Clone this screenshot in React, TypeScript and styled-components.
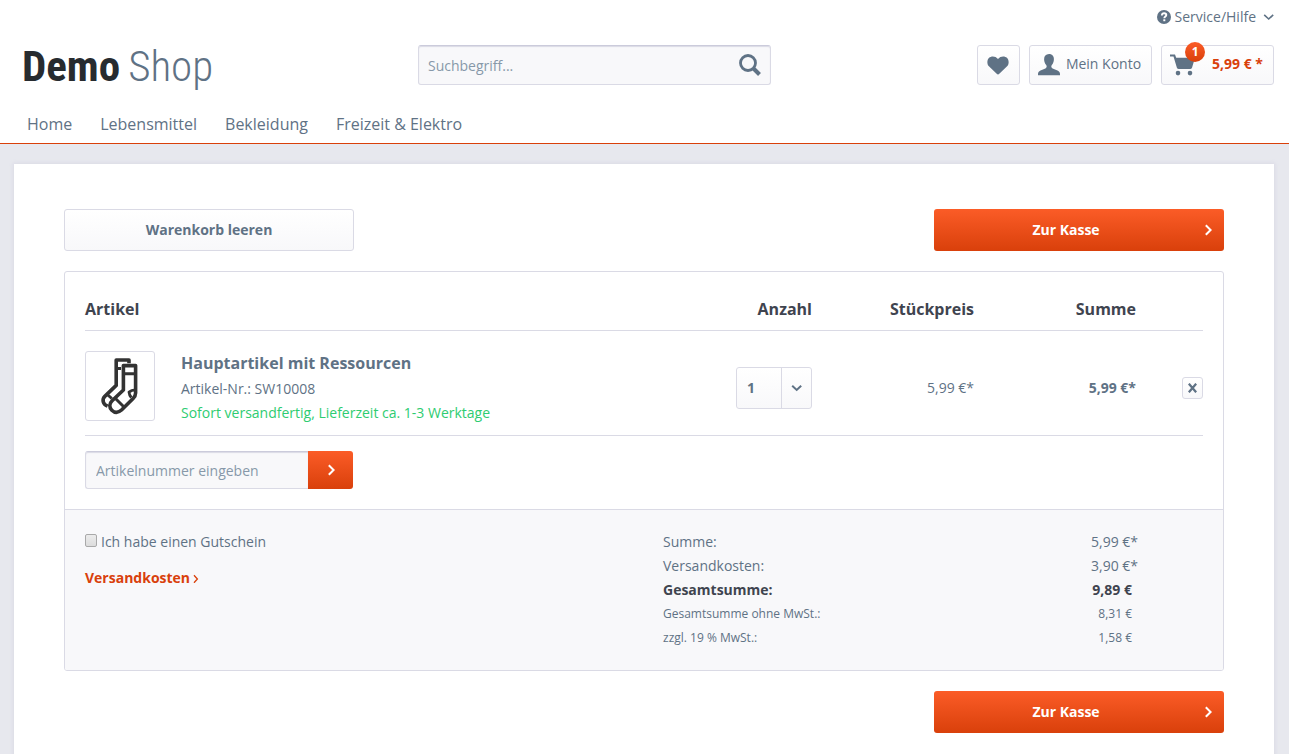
import React from "react";
import styled, { createGlobalStyle, css } from "styled-components";

const color = {
  text: "#5f7285",
  dark: "#3f444f",
  muted: "#8798a9",
  accent: "#d9400b",
  accentLight: "#fb5c27",
  border: "#dadae5",
  surface: "#f8f8fa",
  page: "#e7e8ee",
  success: "#2ecc71",
};

const GlobalStyle = createGlobalStyle`
  *, *::before, *::after { box-sizing: border-box; }
  body {
    margin: 0;
    background: ${color.page};
    color: ${color.text};
    font: 400 14px/24px "Open Sans", "Liberation Sans", sans-serif;
  }
  a { color: inherit; text-decoration: none; }
  button, input, select { font: inherit; color: inherit; margin: 0; }
  button { cursor: pointer; }
`;

const lightSurface = css`
  border: 1px solid ${color.border};
  border-radius: 3px;
  background: linear-gradient(to bottom, #fff, ${color.surface});
`;

const accentSurface = css`
  border: 0;
  background: linear-gradient(to bottom, ${color.accentLight}, ${color.accent});
  color: #fff;
`;

const fieldSurface = css`
  border: 1px solid ${color.border};
  border-top-color: #cbcbdb;
  background: ${color.surface};
  box-shadow: inset 0 1px 1px ${color.border};
  &::placeholder { color: ${color.muted}; opacity: 1; }
`;

const Header = styled.header`
  padding: 0 15px 0 14px;
  background: #fff;
  border-bottom: 1px solid ${color.accent};
`;

const TopBar = styled.div`
  display: flex;
  justify-content: flex-end;
  padding: 5px 0 4px;
`;

const ServiceButton = styled.button`
  display: flex;
  align-items: center;
  gap: 4px;
  padding: 0;
  border: 0;
  background: none;
  & > svg:last-child { margin-left: 3px; }
`;

const MainBar = styled.div`
  display: flex;
  align-items: flex-start;
  height: 40px;
  margin-top: 12px;
`;

const LogoCell = styled.div`
  flex: 404 1 0;
`;

const Logo = styled.a`
  display: flex;
  gap: 8px;
  padding-left: 8px;
  font-family: "Roboto Condensed", Roboto, "Liberation Sans", sans-serif;
  font-size: 43px;
  font-weight: 300;
  line-height: 42px;
  color: ${color.text};
  & > strong { font-weight: 700; color: #272b2f; }
`;

const SearchForm = styled.form`
  flex: 353 1 0;
  display: flex;
  position: relative;
`;

const SearchInput = styled.input`
  ${fieldSurface}
  width: 100%;
  height: 40px;
  padding: 0 46px 0 9px;
  border-radius: 3px;
`;

const SearchButton = styled.button`
  position: absolute;
  top: 0;
  right: 0;
  width: 42px;
  height: 40px;
  padding: 0;
  border: 0;
  background: none;
  display: grid;
  place-items: center;
`;

const Actions = styled.div`
  flex: 503 1 0;
  display: flex;
  justify-content: flex-end;
  gap: 9px;
`;

const ActionLink = styled.a`
  ${lightSurface}
  position: relative;
  display: flex;
  align-items: center;
  gap: 6px;
  height: 40px;
  padding: 0 10px 2px 8px;
`;

const CartAmount = styled.span`
  margin-left: 10px;
  font-weight: 700;
  color: ${color.accent};
`;

const Badge = styled.span`
  ${accentSurface}
  position: absolute;
  top: -4px;
  left: 23px;
  width: 20px;
  border-radius: 10px;
  font-size: 12px;
  font-weight: 700;
  line-height: 20px;
  text-align: center;
`;

const Nav = styled.nav`
  display: flex;
  gap: 28px;
  padding: 27px 13px 7px;
  font-size: 16px;
`;

const Panel = styled.main`
  margin: 20px 15px 0 14px;
  padding: 45px 50px 60px;
  background: #fff;
  box-shadow: 0 0 4px 1px #dadae5;
`;

const ButtonRow = styled.div<{ $end?: boolean }>`
  display: flex;
  justify-content: ${(p) => (p.$end ? "flex-end" : "space-between")};
`;

const BasketButton = styled.button<{ $primary?: boolean }>`
  ${(p) => (p.$primary ? accentSurface : lightSurface)}
  position: relative;
  width: 25%;
  height: 42px;
  padding: ${(p) => (p.$primary ? "0 36px 0 10px" : "0")};
  border-radius: 3px;
  font-weight: 700;
  & > svg { position: absolute; right: 12px; top: 15px; }
`;

const Basket = styled.section`
  margin: 20px 0;
  border: 1px solid ${color.border};
  border-radius: 3px;
  overflow: hidden;
`;

const BasketBody = styled.div`
  padding: 0 20px 20px;
`;

const ItemTable = styled.table`
  width: 100%;
  table-layout: fixed;
  border-collapse: separate;
  border-spacing: 0;
`;

const HeadCell = styled.th<{ $width?: number }>`
  width: ${(p) => (p.$width ? `${p.$width}px` : "auto")};
  padding: 25px 0 9px;
  border-bottom: 1px solid ${color.border};
  font-size: 16px;
  color: ${color.dark};
  text-align: ${(p) => (p.$width ? "right" : "left")};
`;

const Cell = styled.td<{ $bold?: boolean }>`
  padding: 10px 0 0;
  border-bottom: 1px solid ${color.border};
  font-weight: ${(p) => (p.$bold ? 700 : 400)};
  text-align: right;
`;

const ProductCell = styled.td`
  padding: 20px 0 10px;
  border-bottom: 1px solid ${color.border};
`;

const Product = styled.div`
  display: flex;
  align-items: flex-start;
  gap: 26px;
`;

const Thumbnail = styled.a`
  display: block;
  width: 70px;
  height: 70px;
  border: 1px solid ${color.border};
  border-radius: 3px;
  & > svg { display: block; }
`;

const ProductName = styled.a`
  display: block;
  margin-bottom: 2px;
  font-size: 16px;
  font-weight: 700;
`;

const Delivery = styled.div`
  color: ${color.success};
`;

const Quantity = styled.div`
  ${lightSurface}
  position: relative;
  width: 76px;
  height: 42px;
  margin-left: auto;
`;

const QuantitySelect = styled.select`
  appearance: none;
  width: 100%;
  height: 40px;
  padding: 0 40px 0 10px;
  border: 0;
  background: none;
  font-weight: 700;
`;

const QuantityArrow = styled.span`
  position: absolute;
  top: 0;
  right: 0;
  bottom: 0;
  width: 30px;
  border-left: 1px solid ${color.border};
  display: grid;
  place-items: center;
  pointer-events: none;
`;

const RemoveButton = styled.button`
  ${lightSurface}
  display: grid;
  place-items: center;
  width: 21px;
  height: 22px;
  margin-left: auto;
  padding: 0;
`;

const AddForm = styled.form`
  display: flex;
  width: 268px;
  margin-top: 15px;
`;

const AddInput = styled.input`
  ${fieldSurface}
  flex: 1;
  min-width: 0;
  height: 38px;
  padding: 0 10px;
  border-right: 0;
  border-radius: 3px 0 0 3px;
`;

const AddButton = styled.button`
  ${accentSurface}
  display: grid;
  place-items: center;
  width: 45px;
  padding: 0;
  border-radius: 0 3px 3px 0;
`;

const BasketFooter = styled.div`
  display: flex;
  justify-content: space-between;
  padding: 20px;
  border-top: 1px solid ${color.border};
  background: ${color.surface};
`;

const VoucherLabel = styled.label`
  display: flex;
  gap: 4px;
  margin-bottom: 12px;
`;

const VoucherCheck = styled.input`
  appearance: none;
  width: 12px;
  height: 13px;
  margin-top: 4px;
  border: 1px solid #a9a9a9;
  border-radius: 2px;
  background: linear-gradient(to bottom, #ececec, #dcdcdc);
`;

const ShippingLink = styled.a`
  display: flex;
  align-items: center;
  gap: 3px;
  font-weight: 700;
  color: ${color.accent};
`;

const Totals = styled.dl`
  width: 540px;
  margin: 0;
`;

const TotalRow = styled.div<{ $kind?: "total" | "small" }>`
  display: flex;
  justify-content: space-between;
  padding-right: 65px;
  ${(p) => p.$kind === "total" && `font-weight: 700; color: ${color.dark};`}
  ${(p) => p.$kind === "small" && "font-size: 12px;"}
  & > dd {
    display: flex;
    margin: 0;
  }
`;

const Note = styled.span`
  min-width: 6px;
`;

const ChevronRight = () => (
  <svg width="8" height="12" viewBox="0 0 8 12" fill="none" stroke="currentColor" strokeWidth="2" aria-hidden="true">
    <path d="M1.8 1.2 6.600 6l-4.800 4.8" />
  </svg>
);

const ChevronRightSmall = () => (
  <svg width="6" height="10" viewBox="0 0 6 10" fill="none" stroke="currentColor" strokeWidth="1.3" aria-hidden="true">
    <path d="M1 2.200 4.400 6 1 9.800" />
  </svg>
);

const ChevronDown = ({ weight = 1.6 }: { weight?: number }) => (
  <svg width="11" height="8" viewBox="0 0 11 8" fill="none" stroke="currentColor" strokeWidth={weight} aria-hidden="true">
    <path d="M1.200 1.8 5.700 6 10.200 1.8" />
  </svg>
);

const HelpIcon = () => (
  <svg width="14" height="14" viewBox="0 0 14 14" aria-hidden="true">
    <circle cx="7" cy="7" r="7" fill="currentColor" />
    <path d="M4.9 5.4C4.9 4 5.8 3.3 7.1 3.3s2.2.7 2.2 1.8c0 1.5-2 1.5-2 3.2" fill="none" stroke="#fff" strokeWidth="1.9" />
    <rect x="6.3" y="9.3" width="2" height="1.9" fill="#fff" />
  </svg>
);

const SearchIcon = () => (
  <svg width="22" height="22" viewBox="0 0 22 22" fill="none" stroke="currentColor" aria-hidden="true">
    <circle cx="9" cy="9" r="7.5" strokeWidth="2.8" />
    <path d="m14.5 14.5 6 6" strokeWidth="4" />
  </svg>
);

const HeartIcon = () => (
  <svg width="23" height="21" viewBox="-1 -2 23 21" fill="currentColor" aria-hidden="true">
    <path d="M11 18.4c-.5 0-.9-.2-1.300-.6L1.900 10.300C-.3 8.100 0 4 1.900 2.100c2.300-2.200 6.600-2.100 9.100 1 2.500-3.100 6.800-3.200 9.100-1C22 4 22.300 8.100 20.100 10.300l-7.800 7.500c-.4.4-.8.6-1.300.6z" />
  </svg>
);

const AccountIcon = () => (
  <svg width="22" height="24" viewBox="0 -2 22 24" fill="currentColor" aria-hidden="true">
    <path d="M11 0c3.200 0 4.900 2.100 4.900 5.200 0 2.500-.9 4.400-2.100 5.900-.9 1.200-.6 2.700.8 3.300l4.900 2.100C21.300 17.300 22 18.600 22 20v1.300H0V20c0-1.400.7-2.700 2.500-3.500l4.900-2.100c1.400-.6 1.700-2.100.8-3.300C7 9.600 6.100 7.700 6.100 5.200 6.100 2.100 7.800 0 11 0z" />
  </svg>
);

const CartIcon = () => (
  <svg width="26" height="24" viewBox="0 -2 26 24" fill="currentColor" aria-hidden="true">
    <path d="M0 .5h5l1.200 3.300H25l-3 9.900a2 2 0 0 1-1.900 1.300H8.800a2 2 0 0 1-1.900-1.300L3.500 2.500H0z" />
    <circle cx="8" cy="19.100" r="2.300" />
    <circle cx="20" cy="19.100" r="2.300" />
  </svg>
);

const CrossIcon = () => (
  <svg width="9" height="10" viewBox="0 0 9 10" fill="none" stroke="currentColor" strokeWidth="2.300" aria-hidden="true">
    <path d="m.8.7 7.400 8.600M8.200.7.8 9.300" />
  </svg>
);

const SocksIcon = () => (
  <svg width="68" height="68" viewBox="1 1 68 68" fill="none" stroke="#333" strokeWidth="3.600" strokeLinejoin="round" role="img" aria-label="Socken">
    <path d="M44 12.300V9H31.200V34.400L19.800 45.400c-2.800 2.800-2.400 7.600 2.800 9.800" />
    <path d="M31 17.500h5M22.300 43.500l4.500 4" strokeWidth="3" />
    <path d="M38.400 14.600h12.200v27.400c0 2.500-1 4-2.500 5.500L36.500 59c-3.400 3-7 2.800-9.700.2-2.700-2.700-2.800-6.500.3-9.500L38.400 39z" />
    <path d="M38.400 22.700h12.200M30.500 47.500l8 8" strokeWidth="3" />
    <path d="M50.600 38.800c-3 .2-5 .9-6.600 2.300.2 2.200.8 3.700 2.300 5.400" strokeWidth="2.800" />
  </svg>
);

const categories = ["Home", "Lebensmittel", "Bekleidung", "Freizeit & Elektro"];

const totals: { label: string; value: string; note?: boolean; kind?: "total" | "small" }[] = [
  { label: "Summe:", value: "5,99 €", note: true },
  { label: "Versandkosten:", value: "3,90 €", note: true },
  { label: "Gesamtsumme:", value: "9,89 €", kind: "total" },
  { label: "Gesamtsumme ohne MwSt.:", value: "8,31 €", kind: "small" },
  { label: "zzgl. 19 % MwSt.:", value: "1,58 €", kind: "small" },
];

const CheckoutButton = () => (
  <BasketButton type="button" $primary>
    Zur Kasse
    <ChevronRight />
  </BasketButton>
);

export default function App() {
  return (
    <>
      <GlobalStyle />
      <Header>
        <TopBar>
          <ServiceButton type="button">
            <HelpIcon />
            Service/Hilfe
            <ChevronDown />
          </ServiceButton>
        </TopBar>
        <MainBar>
          <LogoCell>
            <Logo href="#">
              <strong>Demo</strong>
              <span>Shop</span>
            </Logo>
          </LogoCell>
          <SearchForm role="search">
            <SearchInput type="text" placeholder="Suchbegriff..." aria-label="Suchbegriff" />
            <SearchButton type="submit" aria-label="Suchen">
              <SearchIcon />
            </SearchButton>
          </SearchForm>
          <Actions>
            <ActionLink href="#" aria-label="Merkzettel">
              <HeartIcon />
            </ActionLink>
            <ActionLink href="#">
              <AccountIcon />
              Mein Konto
            </ActionLink>
            <ActionLink href="#">
              <CartIcon />
              <Badge>1</Badge>
              <CartAmount>5,99 € *</CartAmount>
            </ActionLink>
          </Actions>
        </MainBar>
        <Nav>
          {categories.map((name) => (
            <a href="#" key={name}>
              {name}
            </a>
          ))}
        </Nav>
      </Header>

      <Panel>
        <ButtonRow>
          <BasketButton type="button">Warenkorb leeren</BasketButton>
          <CheckoutButton />
        </ButtonRow>

        <Basket>
          <BasketBody>
            <ItemTable>
              <thead>
                <tr>
                  <HeadCell scope="col">Artikel</HeadCell>
                  <HeadCell scope="col" $width={162}>Anzahl</HeadCell>
                  <HeadCell scope="col" $width={162}>Stückpreis</HeadCell>
                  <HeadCell scope="col" $width={162}>Summe</HeadCell>
                  <HeadCell as="td" $width={67} />
                </tr>
              </thead>
              <tbody>
                <tr>
                  <ProductCell>
                    <Product>
                      <Thumbnail href="#">
                        <SocksIcon />
                      </Thumbnail>
                      <div>
                        <ProductName href="#">Hauptartikel mit Ressourcen</ProductName>
                        <div>Artikel-Nr.: SW10008</div>
                        <Delivery>Sofort versandfertig, Lieferzeit ca. 1-3 Werktage</Delivery>
                      </div>
                    </Product>
                  </ProductCell>
                  <Cell>
                    <Quantity>
                      <QuantitySelect aria-label="Anzahl" defaultValue="1">
                        <option>1</option>
                        <option>2</option>
                        <option>3</option>
                      </QuantitySelect>
                      <QuantityArrow>
                        <ChevronDown weight={2} />
                      </QuantityArrow>
                    </Quantity>
                  </Cell>
                  <Cell>5,99 €*</Cell>
                  <Cell $bold>5,99 €*</Cell>
                  <Cell>
                    <RemoveButton type="button" aria-label="Artikel entfernen">
                      <CrossIcon />
                    </RemoveButton>
                  </Cell>
                </tr>
              </tbody>
            </ItemTable>
            <AddForm>
              <AddInput type="text" placeholder="Artikelnummer eingeben" aria-label="Artikelnummer" />
              <AddButton type="submit" aria-label="Hinzufügen">
                <ChevronRight />
              </AddButton>
            </AddForm>
          </BasketBody>

          <BasketFooter>
            <div>
              <VoucherLabel>
                <VoucherCheck type="checkbox" />
                Ich habe einen Gutschein
              </VoucherLabel>
              <ShippingLink href="#">
                Versandkosten
                <ChevronRightSmall />
              </ShippingLink>
            </div>
            <Totals>
              {totals.map((row) => (
                <TotalRow key={row.label} $kind={row.kind}>
                  <dt>{row.label}</dt>
                  <dd>
                    {row.value}
                    <Note>{row.note ? "*" : ""}</Note>
                  </dd>
                </TotalRow>
              ))}
            </Totals>
          </BasketFooter>
        </Basket>

        <ButtonRow $end>
          <CheckoutButton />
        </ButtonRow>
      </Panel>
    </>
  );
}
